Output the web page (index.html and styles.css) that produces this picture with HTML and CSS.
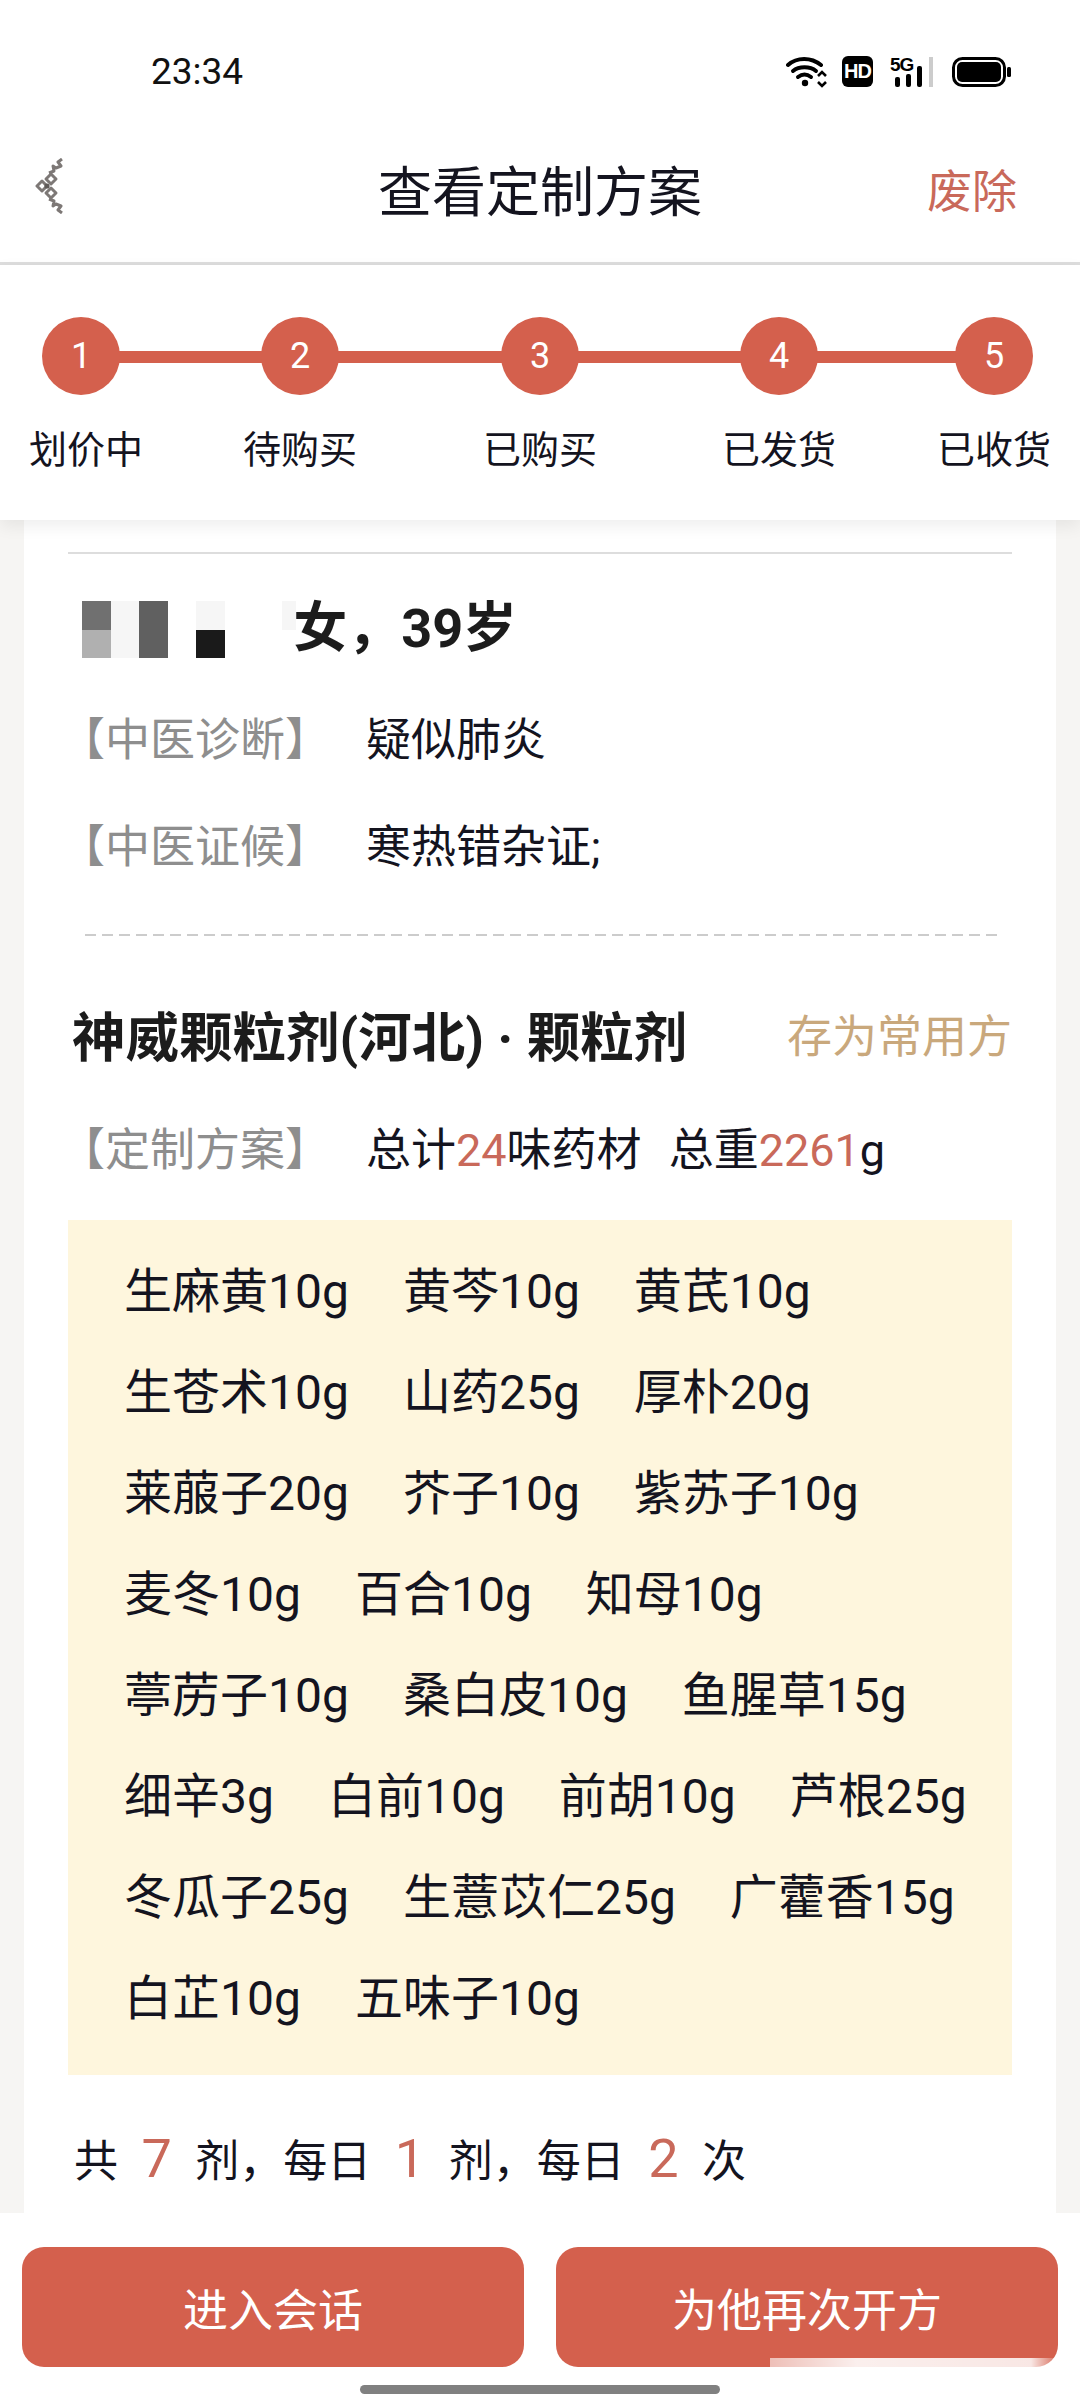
FILE: index.html
```html
<!DOCTYPE html>
<html lang="zh-CN">
<head>
  <meta charset="UTF-8">
  <meta name="viewport" content="width=device-width, initial-scale=1.0">
  <title>查看定制方案</title>
  <link rel="stylesheet" href="styles.css">
</head>
<body>
  <div class="status-bar">
    <div class="clock">23:34</div>
    <div class="status-icons">
      <svg class="wifi" width="44" height="32" viewBox="0 0 44 32">
        <g fill="none" stroke="#000" stroke-width="4" stroke-linecap="round">
          <path d="M2 9 C11 1 25 1 35 9"/>
          <path d="M7 15 C13 10 24 10 30 15"/>
          <path d="M12 21 C16 18 21 18 25 21"/>
        </g>
        <circle cx="19" cy="27" r="3.2" fill="#000"/>
        <path d="M32 20 L36 16 L40 20 M32 26 L36 30 L40 26" fill="none" stroke="#000" stroke-width="2.6"/>
      </svg>
      <div class="hd-badge">HD</div>
      <svg class="signal" width="48" height="38" viewBox="0 -6 48 38">
        <text x="4" y="15" class="signal-label">5G</text>
        <rect x="9" y="21" width="5" height="10" rx="2" fill="#000"/>
        <rect x="20" y="18" width="5" height="13" rx="2" fill="#000"/>
        <rect x="31" y="10" width="5" height="21" rx="2" fill="#000"/>
        <rect x="43" y="1" width="4" height="30" fill="#ccc"/>
      </svg>
      <svg class="battery" width="60" height="32" viewBox="0 0 60 32">
        <rect x="1.5" y="2.5" width="51" height="27" rx="9" fill="none" stroke="#000" stroke-width="3"/>
        <rect x="5" y="6" width="44" height="20" rx="5" fill="#000"/>
        <rect x="55" y="11" width="4" height="10" rx="1.5" fill="#000"/>
      </svg>
    </div>
  </div>

  <div class="nav-bar">
    <svg class="back-icon" width="30" height="56" viewBox="0 0 30 56">
      <g fill="none" stroke="#7d7876" stroke-width="3" stroke-linejoin="round">
        <path d="M27 1 L23 4 L26 8 L21 10 L18 8 L19 13 L14 15"/>
        <path d="M27 55 L23 52 L26 48 L21 46 L18 48 L19 43 L14 41"/>
        <path d="M16 16 L21 21 L16 26 L11 21 Z"/>
        <path d="M7 23 L12 28 L7 33 L2 28 Z"/>
        <path d="M16 30 L21 35 L16 40 L11 35 Z"/>
      </g>
      <circle cx="12" cy="28" r="2.6" fill="#5f5a58"/>
    </svg>
    <div class="nav-title">查看定制方案</div>
    <div class="nav-action">废除</div>
  </div>

  <div class="steps">
    <div class="step"><div class="step-dot">1</div><div class="step-label first">划价中</div></div>
    <div class="step"><div class="step-dot">2</div><div class="step-label">待购买</div></div>
    <div class="step"><div class="step-dot">3</div><div class="step-label">已购买</div></div>
    <div class="step"><div class="step-dot">4</div><div class="step-label">已发货</div></div>
    <div class="step"><div class="step-dot">5</div><div class="step-label">已收货</div></div>
  </div>

  <div class="content">
    <div class="card">
      <div class="divider"></div>

      <div class="patient">
        <div class="mosaic">
          <i class="m-mid"></i><i class="m-faint"></i><i class="m-dark"></i><i></i><i class="m-faint"></i><i></i><i></i><i class="m-faint"></i>
          <i class="m-light"></i><i class="m-faint"></i><i class="m-dark"></i><i></i><i class="m-black"></i><i></i><i></i><i></i>
        </div>
        <div class="patient-text">女，39岁</div>
      </div>

      <div class="info-row first">
        <div class="info-label">【中医诊断】</div>
        <div>疑似肺炎</div>
      </div>
      <div class="info-row second">
        <div class="info-label">【中医证候】</div>
        <div>寒热错杂证;</div>
      </div>

      <div class="dashed"></div>

      <div class="plan-head">
        <div class="plan-title">神威颗粒剂(河北) · 颗粒剂</div>
        <div class="plan-save">存为常用方</div>
      </div>

      <div class="info-row plan">
        <div class="info-label">【定制方案】</div>
        <div>总计<span class="num">24</span>味药材<span class="weight">总重<span class="num">2261</span>g</span></div>
      </div>

      <div class="herbs">
        <span>生麻黄10g</span><span>黄芩10g</span><span>黄芪10g</span>
        <span>生苍术10g</span><span>山药25g</span><span>厚朴20g</span>
        <span>莱菔子20g</span><span>芥子10g</span><span>紫苏子10g</span>
        <span>麦冬10g</span><span>百合10g</span><span>知母10g</span>
        <span>葶苈子10g</span><span>桑白皮10g</span><span>鱼腥草15g</span>
        <span>细辛3g</span><span>白前10g</span><span>前胡10g</span><span>芦根25g</span>
        <span>冬瓜子25g</span><span>生薏苡仁25g</span><span>广藿香15g</span>
        <span>白芷10g</span><span>五味子10g</span>
      </div>

      <div class="dosage">共<span class="dose">7</span>剂，每日<span class="dose">1</span>剂，每日<span class="dose">2</span>次</div>
    </div>
  </div>

  <div class="footer">
    <button class="action-btn">进入会话</button>
    <button class="action-btn">为他再次开方</button>
  </div>

  <div class="home-bar"></div>
  <div class="corner-haze"></div>
</body>
</html>
```

FILE: styles.css
```css
* { box-sizing: border-box; }
html, body { margin: 0; padding: 0; }
body { position: relative; width: 1080px; height: 2400px; overflow: hidden; display: flex; flex-direction: column; background-color: #fff; color: #14141f; font-family: Roboto, "Noto Sans CJK SC", sans-serif; }

/* top status line */
.status-bar { height: 110px; flex: none; display: flex; justify-content: space-between; padding: 50px 68px 0 151px; }
.clock { font-size: 37px; line-height: 44px; color: #111; }
.status-icons { display: flex; align-items: flex-start; padding-top: 6px; }
.wifi { margin-right: 12px; }
.hd-badge { width: 31px; height: 31px; border-radius: 6px; background-color: #000; color: #fff; font-family: "Liberation Sans", sans-serif; font-size: 20px; font-weight: bold; letter-spacing: -1px; line-height: 31px; text-align: center; margin-right: 13px; }
.signal { margin: -6px 18px 0 0; }
.signal-label { font-family: "Liberation Sans", sans-serif; font-size: 19px; font-weight: bold; letter-spacing: -1px; fill: #000; }

/* title bar */
.nav-bar { height: 155px; flex: none; display: grid; grid-template-columns: 1fr auto 1fr; align-items: center; padding: 0 63px; border-bottom: 3px solid #ddd; }
.back-icon { display: block; margin-left: -28px; }
.nav-title { font-size: 54px; line-height: 70px; margin-top: 16px; }
.nav-action { justify-self: end; font-size: 45px; line-height: 60px; color: #c9695a; margin-top: 14px; }

/* order progress */
.steps { position: relative; z-index: 1; height: 255px; flex: none; display: grid; grid-template-columns: 110px 328px 152px 326px 104px; padding: 52px 0 0 26px; background-color: #fff; box-shadow: 0 6px 16px rgba(0, 0, 0, 0.07); }
.steps::before { content: ""; position: absolute; left: 81px; right: 84px; top: 86px; height: 12px; background-color: #d4604d; }
.step { position: relative; display: flex; flex-direction: column; align-items: center; }
.step-dot { width: 78px; height: 78px; border-radius: 50%; background-color: #d4604d; color: #fff; font-size: 36px; line-height: 78px; text-align: center; }
.step-label { margin-top: 30px; font-size: 38px; line-height: 50px; white-space: nowrap; }
.step-label.first { margin-left: 10px; }

/* scrolled record */
.content { flex: 1; min-height: 0; padding: 0 24px; background-color: #f6f5f3; }
.card { height: 100%; background-color: #fff; padding: 32px 44px 0; }
.divider { height: 2px; background-color: #ddd; }

.patient { display: flex; align-items: center; height: 60px; margin-top: 45px; }
.mosaic { display: grid; grid-template-columns: repeat(7, 28.6px) 14px; grid-template-rows: 29px 28px; margin-left: 14px; }
.m-faint { background-color: #f6f6f6; }
.m-mid { background-color: #707070; }
.m-dark { background-color: #606060; }
.m-light { background-color: #b0b0b0; }
.m-black { background-color: #1a1a1a; }
.patient-text { margin-left: -3px; font-size: 54px; font-weight: bold; line-height: 60px; color: #1c1c1c; }

.info-row { display: flex; align-items: center; height: 60px; font-size: 45px; }
.info-row.first { margin-top: 47px; }
.info-row.second { margin-top: 47px; }
.info-row.plan { margin-top: 48px; }
.info-label { width: 306px; flex: none; margin-left: -8px; font-size: 45px; color: #8e8e8e; white-space: nowrap; }
.num { color: #c9695a; }
.weight { margin-left: 27px; }

.dashed { height: 2px; margin: 61px 14px 0 17px; background: repeating-linear-gradient(to right, #ccc 0, #ccc 11px, transparent 11px, transparent 17px); }

.plan-head { display: flex; justify-content: space-between; align-items: center; height: 70px; margin-top: 62px; }
.plan-title { margin-left: 4px; font-size: 53.5px; font-weight: bold; color: #1c1c1c; white-space: nowrap; }
.plan-save { font-size: 45px; color: #c9a87c; }

.herbs { display: flex; flex-wrap: wrap; column-gap: 54px; height: 855px; margin-top: 44px; padding: 21px 30px 0 56px; background-color: #fef6dd; font-size: 48px; line-height: 101px; align-content: flex-start; }

.dosage { display: flex; align-items: center; height: 70px; margin: 48px 0 0 6px; font-size: 44px; }
.dose { margin: 0 23.5px; font-size: 54px; color: #c9695a; }

/* bottom actions */
.footer { height: 187px; flex: none; display: flex; gap: 32px; padding: 34px 22px 0; background-color: #fff; }
.action-btn { flex: 1; height: 120px; border: none; border-radius: 22px; background-color: #d4604d; color: #fff; font-family: inherit; font-size: 45px; }

.home-bar { position: absolute; left: 360px; bottom: 6px; width: 360px; height: 9px; border-radius: 5px; background-color: #808080; }
.corner-haze { position: absolute; left: 770px; top: 2358px; width: 290px; height: 34px; background: linear-gradient(to right, rgba(255, 255, 255, 0.6), rgba(255, 255, 255, 0.9) 30%, rgba(255, 255, 255, 0.85) 90%, rgba(255, 255, 255, 0)); }
```
